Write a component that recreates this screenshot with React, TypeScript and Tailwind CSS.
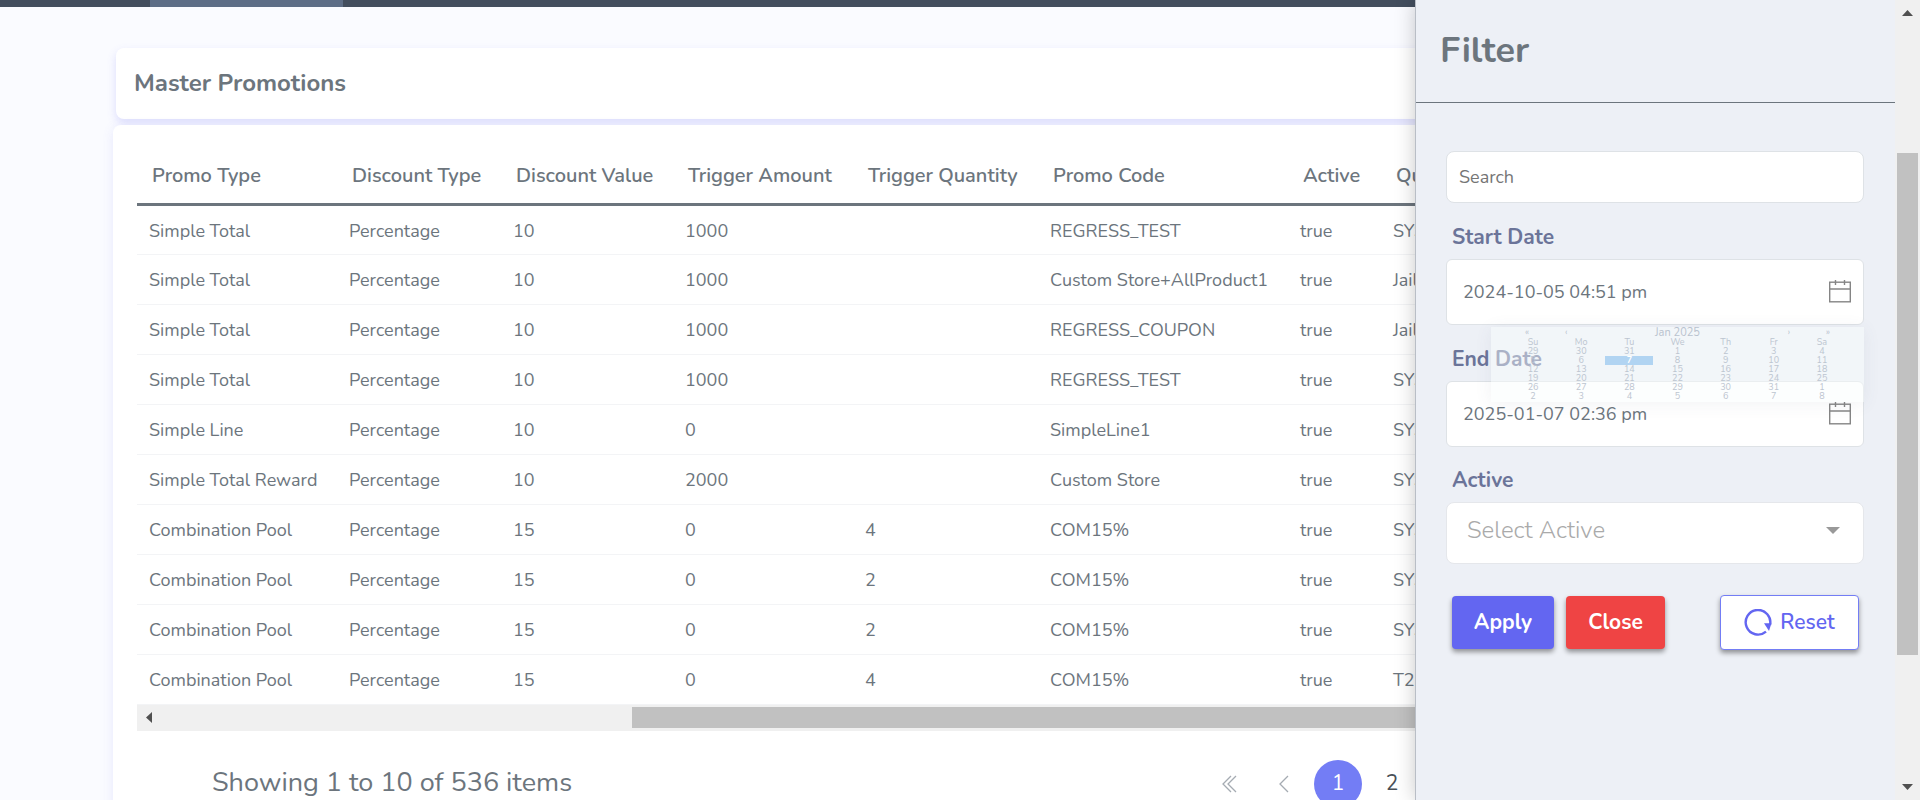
import type { ReactNode } from "react";

const columns = [
  { title: "Promo Type", width: "w-[200px]" },
  { title: "Discount Type", width: "w-[164px]" },
  { title: "Discount Value", width: "w-[172px]" },
  { title: "Trigger Amount", width: "w-[180px]" },
  { title: "Trigger Quantity", width: "w-[185px]" },
  { title: "Promo Code", width: "w-[250px]" },
  { title: "Active", width: "w-[93px]" },
  { title: "Qualifier", width: "" },
];

const rows = [
  ["Simple Total", "Percentage", "10", "1000", "", "REGRESS_TEST", "true", "SYS"],
  ["Simple Total", "Percentage", "10", "1000", "", "Custom Store+AllProduct1", "true", "Jail"],
  ["Simple Total", "Percentage", "10", "1000", "", "REGRESS_COUPON", "true", "Jail"],
  ["Simple Total", "Percentage", "10", "1000", "", "REGRESS_TEST", "true", "SYS"],
  ["Simple Line", "Percentage", "10", "0", "", "SimpleLine1", "true", "SYS"],
  ["Simple Total Reward", "Percentage", "10", "2000", "", "Custom Store", "true", "SYS"],
  ["Combination Pool", "Percentage", "15", "0", "4", "COM15%", "true", "SYS"],
  ["Combination Pool", "Percentage", "15", "0", "2", "COM15%", "true", "SYS"],
  ["Combination Pool", "Percentage", "15", "0", "2", "COM15%", "true", "SYS"],
  ["Combination Pool", "Percentage", "15", "0", "4", "COM15%", "true", "T20"],
];

const weekDays = ["Su", "Mo", "Tu", "We", "Th", "Fr", "Sa"];

const weeks = [
  [29, 30, 31, 1, 2, 3, 4],
  [5, 6, 7, 8, 9, 10, 11],
  [12, 13, 14, 15, 16, 17, 18],
  [19, 20, 21, 22, 23, 24, 25],
  [26, 27, 28, 29, 30, 31, 1],
  [2, 3, 4, 5, 6, 7, 8],
];

function Chevrons({ double = false, flip = false }: { double?: boolean; flip?: boolean }) {
  return (
    <svg
      width="18"
      height="18"
      viewBox="0 0 18 18"
      fill="none"
      stroke="#a5abb2"
      strokeWidth="1.3"
      className={flip ? "rotate-180" : ""}
      aria-hidden="true"
    >
      {double ? <path d="M10 1L2 9l8 8M15 1L7 9l8 8" /> : <path d="M13 1L5 9l8 8" />}
    </svg>
  );
}

function CalendarIcon() {
  return (
    <svg width="22" height="23" viewBox="0 0 22 23" fill="none" stroke="#858585" strokeWidth="1.4" aria-hidden="true">
      <rect x="0.7" y="2.2" width="20.6" height="19.6" />
      <path d="M0.7 9h20.6M6.5 0v5M15.5 0v5" />
    </svg>
  );
}

function ResetIcon() {
  return (
    <svg width="28" height="28" viewBox="0 0 28 28" aria-hidden="true">
      <path d="M22 22.6A12.3 12.3 0 1 1 26 16" fill="none" stroke="#6366f1" strokeWidth="2.4" />
      <path d="M20 14.2H27.4L25 22Z" fill="#6366f1" />
    </svg>
  );
}

function PagerButton({ label, current = false, children }: { label: string; current?: boolean; children: ReactNode }) {
  return (
    <button
      type="button"
      aria-label={label}
      className={
        current
          ? "flex size-12 items-center justify-center rounded-full bg-[#737df5] text-[21px] text-white"
          : "flex size-12 items-center justify-center rounded-full text-[21px] text-[#495057]"
      }
    >
      {children}
    </button>
  );
}

function CalendarPopup() {
  return (
    <div className="absolute top-full right-0 left-[45px] z-10 mt-0.5 bg-[#f8fcfd]/45 px-[18px] pb-px shadow-[0_2px_16px_rgba(80,90,110,0.08)]">
      <div className="flex h-[11px] items-center justify-between px-4 text-[9px] leading-[9px] text-[#b9c2ce]">
        <span className="flex gap-9">
          <span>«</span>
          <span>‹</span>
        </span>
        <span className="text-[11px]">Jan 2025</span>
        <span className="flex gap-9">
          <span>›</span>
          <span>»</span>
        </span>
      </div>
      <table className="w-full table-fixed text-center text-[9px] leading-[9px] text-[#bcc5d0]">
        <thead>
          <tr>
            {weekDays.map((day) => (
              <th key={day} className="p-0 font-normal">
                {day}
              </th>
            ))}
          </tr>
        </thead>
        <tbody>
          {weeks.map((week, w) => (
            <tr key={w}>
              {week.map((day, d) => (
                <td key={d} className={w === 1 && d === 2 ? "bg-[#b1d4f2] p-0 font-bold text-white" : "p-0"}>
                  {day}
                </td>
              ))}
            </tr>
          ))}
        </tbody>
      </table>
    </div>
  );
}

function DateField({ id, label, value, children }: { id: string; label: string; value: string; children?: ReactNode }) {
  return (
    <>
      <label htmlFor={id} className="mt-[22px] mb-2.5 block px-1.5 text-[21px] leading-6 font-bold text-[#6b7499]">
        {label}
      </label>
      <div className="relative">
        <input
          id={id}
          type="text"
          defaultValue={value}
          className="block h-[66px] w-full rounded-md border border-[#dee2e6] bg-white pr-14 pl-4 text-lg text-[#6c757d]"
        />
        <button type="button" aria-label={`Choose ${label}`} className="absolute top-[21px] right-[13px]">
          <CalendarIcon />
        </button>
        {children}
      </div>
    </>
  );
}

function FilterDrawer() {
  return (
    <aside className="absolute inset-y-0 right-0 z-20 w-[479px] bg-[#edf0f6] shadow-[-1px_0_0_#b9bec6,0_0_20px_rgba(0,0,0,0.24)]">
      <header className="flex h-[103px] items-center border-b border-[#6c757d] px-6">
        <h2 className="text-4xl font-bold text-[#6c757d]">Filter</h2>
      </header>
      <form className="pt-12 pr-[31px] pl-[30px]" onSubmit={(e) => e.preventDefault()}>
        <input
          type="search"
          aria-label="Search"
          placeholder="Search"
          className="block h-[52px] w-full rounded-lg border border-[#dee2e6] bg-white px-3 text-lg placeholder:text-[#757575]"
        />
        <DateField id="start" label="Start Date" value="2024-10-05 04:51 pm">
          <CalendarPopup />
        </DateField>
        <DateField id="end" label="End Date" value="2025-01-07 02:36 pm" />
        <label htmlFor="active" className="mt-[21px] mb-2.5 block px-1.5 text-[21px] leading-6 font-bold text-[#6b7499]">
          Active
        </label>
        <div className="relative">
          <select
            id="active"
            defaultValue=""
            className="block h-[62px] w-full appearance-none rounded-lg border border-[#e5e7eb] bg-white px-5 pb-1.5 text-2xl font-light text-[#aaaaaa]"
          >
            <option value="">Select Active</option>
            <option value="true">true</option>
            <option value="false">false</option>
          </select>
          <svg
            width="14"
            height="7"
            viewBox="0 0 14 7"
            className="pointer-events-none absolute top-[25px] right-6"
            aria-hidden="true"
          >
            <path d="M0 0h14L7 7z" fill="#999" />
          </svg>
        </div>
        <div className="mt-[31px] flex items-center gap-3 pr-[5px] pl-1.5 text-[21px]">
          <button
            type="button"
            className="h-[53px] w-[102px] rounded bg-[#6366f1] font-bold text-white shadow-[0_3px_5px_rgba(0,0,0,0.4)]"
          >
            Apply
          </button>
          <button
            type="button"
            className="h-[53px] w-[99px] rounded bg-[#ef4444] font-bold text-white shadow-[0_3px_5px_rgba(0,0,0,0.4)]"
          >
            Close
          </button>
          <button
            type="button"
            className="ml-auto flex h-[55px] w-[139px] items-center justify-center gap-2 rounded border border-[#737df5] bg-white font-semibold text-[#6366f1] shadow-[0_3px_5px_rgba(0,0,0,0.4)]"
          >
            <ResetIcon />
            Reset
          </button>
        </div>
      </form>
    </aside>
  );
}

function PageScrollbar() {
  return (
    <div className="flex w-[25px] shrink-0 flex-col items-center bg-[#f0f0f0]" aria-hidden="true">
      <svg width="25" height="25" viewBox="0 0 25 25">
        <path d="M12.5 10L18 16H7z" fill="#505050" />
      </svg>
      <div className="flex-[128]" />
      <div className="w-[21px] flex-[502] bg-[#c1c1c1]" />
      <div className="flex-[120]" />
      <svg width="25" height="25" viewBox="0 0 25 25">
        <path d="M12.5 15L18 9H7z" fill="#505050" />
      </svg>
    </div>
  );
}

export default function App() {
  return (
    <div className="flex h-screen overflow-hidden bg-[#fafbff] font-['Nunito','Open_Sans',sans-serif] text-[#6c757d]">
      <div className="relative flex-1 overflow-hidden">
        <nav className="flex h-[7px] bg-[#434e5e] pl-[150px]">
          <div className="w-[193px] bg-[#5d6d86]" />
        </nav>
        <main className="px-28 pt-[41px]">
          <header className="ml-1 flex h-[71px] items-center rounded-lg bg-white px-[18px] pb-0.5 shadow-[0_4px_10px_rgba(99,102,241,0.2)]">
            <h1 className="text-2xl font-bold">Master Promotions</h1>
          </header>
          <section className="relative mt-1.5 ml-px rounded-lg bg-white pt-[27px] pb-6 shadow-[0_2px_12px_rgba(99,102,241,0.12)]">
            <div className="px-6">
              <table className="w-full table-fixed border-collapse text-left">
                <thead>
                  <tr className="h-[52px] border-b-3 border-[#6c757d]">
                    {columns.map((c) => (
                      <th
                        key={c.title}
                        className={`${c.width} px-[15px] pb-0.5 text-xl font-semibold whitespace-nowrap`}
                      >
                        {c.title}
                      </th>
                    ))}
                  </tr>
                </thead>
                <tbody>
                  {rows.map((row, r) => (
                    <tr key={r} className="h-[50px] border-b border-[#f3f4f6]">
                      {row.map((cell, i) => (
                        <td key={i} className="px-3 pt-0.5 text-lg whitespace-nowrap">
                          {cell}
                        </td>
                      ))}
                    </tr>
                  ))}
                </tbody>
              </table>
              <div className="flex h-[26px] items-center bg-[#f0f0f0]" aria-hidden="true">
                <svg width="25" height="25" viewBox="0 0 25 25">
                  <path d="M9 12.5L15 7v11z" fill="#505050" />
                </svg>
                <div className="flex-[470]" />
                <div className="h-[21px] flex-[1103] bg-[#c1c1c1]" />
                <div className="w-[25px]" />
              </div>
            </div>
            <div className="mt-[29px] flex items-center justify-between pr-[97px] pl-[99px]">
              <p className="text-[27px]">Showing 1 to 10 of 536 items</p>
              <div className="flex gap-1.5">
                <PagerButton label="First page">
                  <Chevrons double />
                </PagerButton>
                <PagerButton label="Previous page">
                  <Chevrons />
                </PagerButton>
                <PagerButton label="Page 1" current>
                  1
                </PagerButton>
                <PagerButton label="Page 2">2</PagerButton>
                <PagerButton label="Page 3">3</PagerButton>
                <PagerButton label="Page 4">4</PagerButton>
                <PagerButton label="Page 5">5</PagerButton>
                <PagerButton label="Next page">
                  <Chevrons flip />
                </PagerButton>
                <PagerButton label="Last page">
                  <Chevrons double flip />
                </PagerButton>
              </div>
            </div>
          </section>
        </main>
        <FilterDrawer />
      </div>
      <PageScrollbar />
    </div>
  );
}
